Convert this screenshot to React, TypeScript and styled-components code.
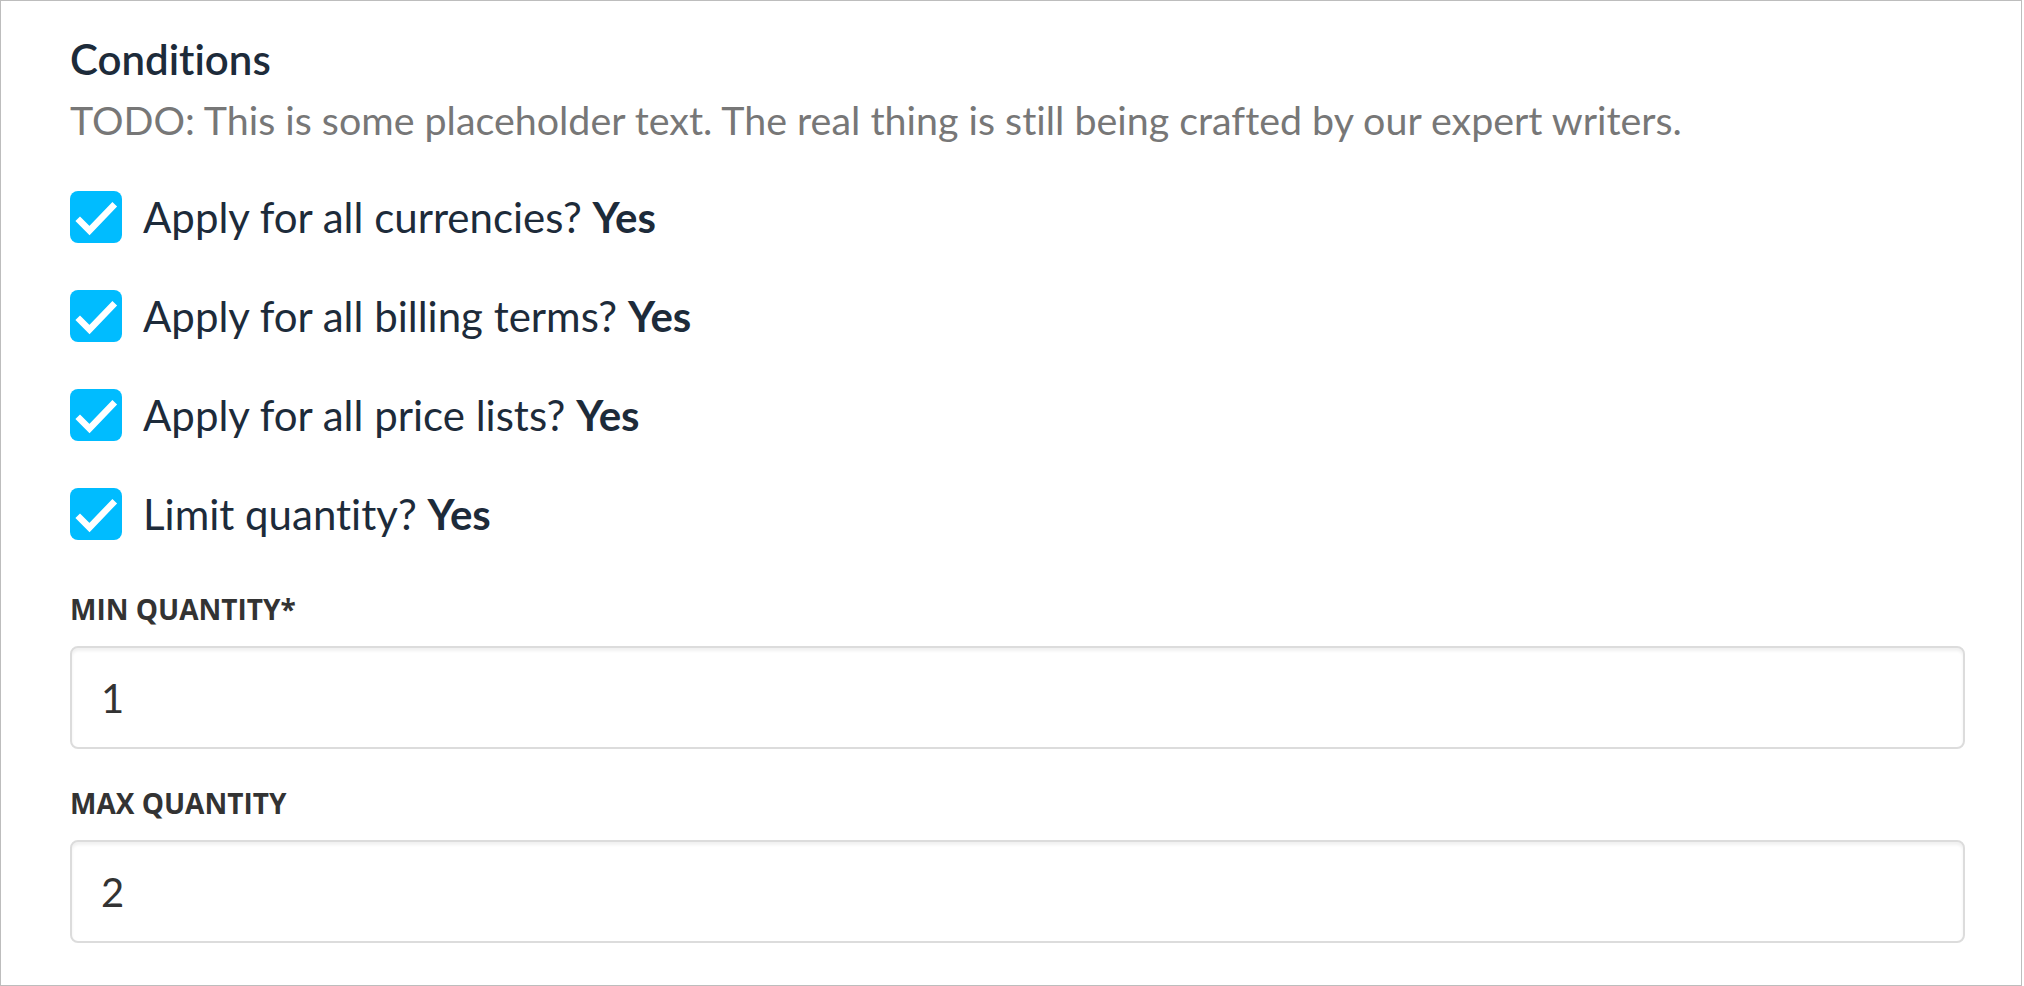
import React from "react";
import styled, { createGlobalStyle } from "styled-components";

const GlobalStyle = createGlobalStyle`
  html, body { margin: 0; padding: 0; background: #ffffff; }
  * { box-sizing: border-box; }
`;

const Frame = styled.section`
  width: 2022px;
  border: 1px solid #bdbdbd;
  background: #ffffff;
  padding: 33px 56px 42px 69px;
  font-family: Lato, "Open Sans", sans-serif;
  font-variant-ligatures: none;
  color: #1d2b3a;
`;

const Heading = styled.h2`
  margin: 0 0 12px;
  font-size: 42px;
  line-height: 50px;
  font-weight: 600;
  color: #1d2b3a;
`;

const Description = styled.p`
  margin: 0;
  font-size: 39.4px;
  line-height: 48px;
  font-weight: 400;
  color: #777777;
`;

const OptionList = styled.div`
  display: flex;
  flex-direction: column;
  gap: 47px;
  margin-top: 47px;
`;

const Option = styled.label`
  display: flex;
  align-items: center;
  gap: 21px;
  font-size: 42px;
  line-height: 52px;
  color: #1d2b3a;
  cursor: pointer;
`;

const Box = styled.span`
  flex: 0 0 auto;
  width: 52px;
  height: 52px;
  border-radius: 8px;
  background: #00bcff;
  display: flex;
  align-items: center;
  justify-content: center;
`;

const Value = styled.strong`
  font-weight: 700;
`;

const Field = styled.div<{ $first?: boolean }>`
  display: flex;
  flex-direction: column;
  gap: 18px;
  margin-top: ${(p) => (p.$first ? "50px" : "35px")};
`;

const FieldLabel = styled.label`
  font-family: "Open Sans", sans-serif;
  font-weight: 700;
  font-size: 28px;
  line-height: 38px;
  text-transform: uppercase;
  color: #333333;
`;

const TextInput = styled.input`
  width: 100%;
  height: 103px;
  border: 2px solid #dcdcdc;
  border-radius: 8px;
  box-shadow: inset 0 3px 3px rgba(0, 0, 0, 0.06);
  padding: 0 29px;
  font-family: Lato, "Open Sans", sans-serif;
  font-size: 40px;
  color: #333333;
  background: #ffffff;
  outline: none;
`;

const Check = () => (
  <svg width="52" height="52" viewBox="0 0 52 52" aria-hidden="true">
    <path d="M10 30 L19.5 39.5 L42.5 15.5" fill="none" stroke="#ffffff" strokeWidth="6.5" strokeLinecap="square" strokeLinejoin="miter" />
  </svg>
);

const options = [
  "Apply for all currencies?",
  "Apply for all billing terms?",
  "Apply for all price lists?",
  "Limit quantity?",
];

export default function App() {
  return (
    <>
      <GlobalStyle />
      <Frame>
        <Heading>Conditions</Heading>
        <Description>
          TODO: This is some placeholder text. The real thing is still being crafted by our expert writers.
        </Description>
        <OptionList>
          {options.map((o) => (
            <Option key={o}>
              <Box>
                <Check />
              </Box>
              <span>
                {o} <Value>Yes</Value>
              </span>
            </Option>
          ))}
        </OptionList>
        <Field $first>
          <FieldLabel htmlFor="min-qty">Min quantity*</FieldLabel>
          <TextInput id="min-qty" defaultValue="1" />
        </Field>
        <Field>
          <FieldLabel htmlFor="max-qty">Max quantity</FieldLabel>
          <TextInput id="max-qty" defaultValue="2" />
        </Field>
      </Frame>
    </>
  );
}
